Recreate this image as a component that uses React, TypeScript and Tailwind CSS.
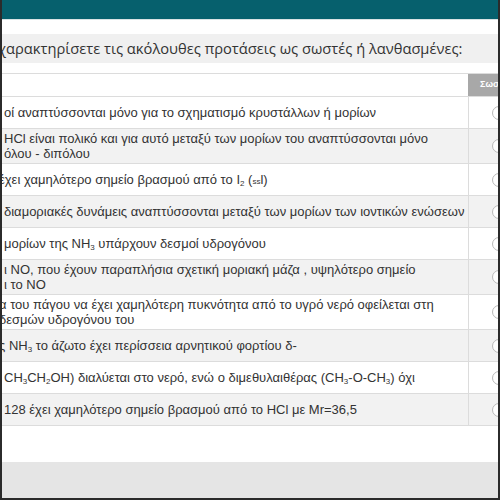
const rows: { lines: React.ReactNode[]; shift?: number }[] = [
  { lines: ["οί αναπτύσσονται μόνο για το σχηματισμό κρυστάλλων ή μορίων"] },
  {
    lines: [
      "HCl είναι πολικό και για αυτό μεταξύ των μορίων του αναπτύσσονται μόνο",
      "όλου - διπόλου",
    ],
  },
  {
    lines: [
      <>
        έχει χαμηλότερο σημείο βρασμού από το I<sub className="text-[8px] leading-none">2</sub> (
        <span className="text-[8px] leading-none">ss</span>l)
      </>,
    ],
    shift: 3,
  },
  { lines: ["διαμοριακές δυνάμεις αναπτύσσονται μεταξύ των μορίων των ιοντικών ενώσεων"] },
  {
    lines: [
      <>
        μορίων της NH<sub className="text-[8px] leading-none">3</sub> υπάρχουν δεσμοί υδρογόνου
      </>,
    ],
  },
  {
    lines: ["ι NO, που έχουν παραπλήσια σχετική μοριακή μάζα , υψηλότερο σημείο", "ι το NO"],
  },
  {
    lines: [
      "α του πάγου να έχει χαμηλότερη πυκνότητα από το υγρό νερό οφείλεται στη",
      "δεσμών υδρογόνου του",
    ],
    shift: 3,
  },
  {
    lines: [
      <>
        ς NH<sub className="text-[8px] leading-none">3</sub> το άζωτο έχει περίσσεια αρνητικού
        φορτίου δ-
      </>,
    ],
    shift: 3,
  },
  {
    lines: [
      <>
        CH<sub className="text-[8px] leading-none">3</sub>CH
        <sub className="text-[8px] leading-none">2</sub>OH) διαλύεται στο νερό, ενώ ο
        διμεθυλαιθέρας (CH<sub className="text-[8px] leading-none">3</sub>-O-CH
        <sub className="text-[8px] leading-none">3</sub>) όχι
      </>,
    ],
  },
  { lines: ["128 έχει χαμηλότερο σημείο βρασμού από το HCl με Mr=36,5"] },
];

function Radio() {
  return (
    <span className="block h-[14px] w-[14px] shrink-0 rounded-full border border-[#b9b9b9] bg-white -mr-[8px]" />
  );
}

export default function App() {
  return (
    <div className="relative flex h-[500px] w-[500px] flex-col overflow-hidden border-x-2 border-b-2 border-[#2b2b2b] bg-white font-['Liberation_Sans',Arial,sans-serif] text-[#333]">
      <div className="h-[20px] shrink-0 border-b border-[#d9e3e4] bg-[#06606d]" />
      <div className="h-[14px] shrink-0" />
      <div className="flex h-[29px] shrink-0 items-center bg-[#f0f0f0] font-['Open_Sans',sans-serif] text-[14.7px] whitespace-nowrap">
        <span className="-ml-[4px]">χαρακτηρίσετε τις ακόλουθες προτάσεις ως σωστές ή λανθασμένες:</span>
      </div>
      <div className="h-[10px] shrink-0" />
      <div className="flex flex-col border-t border-[#dcdcdc]">
        <div className="flex h-[23px] border-b border-[#dcdcdc]">
          <div className="flex-1" />
          <div className="flex w-[30px] items-center overflow-hidden bg-[#a8a8a8] pl-[12px] text-[9px] font-bold whitespace-nowrap text-white">
            Σωστό
          </div>
        </div>
        {rows.map((r, i) => (
          <div
            key={i}
            className={`flex min-h-[32px] border-b border-[#dcdcdc] text-[13px] leading-[15px] ${
              i % 2 === 1 ? "bg-[#f2f2f2]" : "bg-white"
            }`}
          >
            <div className="flex flex-1 flex-col justify-center py-[2px] whitespace-nowrap">
              {r.lines.map((l, j) => (
                <div key={j} className={r.shift ? "-ml-[3px]" : "pl-[2px]"}>
                  {l}
                </div>
              ))}
            </div>
            <div className="flex w-[30px] items-center justify-end border-l border-[#dcdcdc]">
              <Radio />
            </div>
          </div>
        ))}
      </div>
      <div className="flex-1" />
      <div className="h-[36px] shrink-0 bg-[#e5e5e5]" />
    </div>
  );
}
